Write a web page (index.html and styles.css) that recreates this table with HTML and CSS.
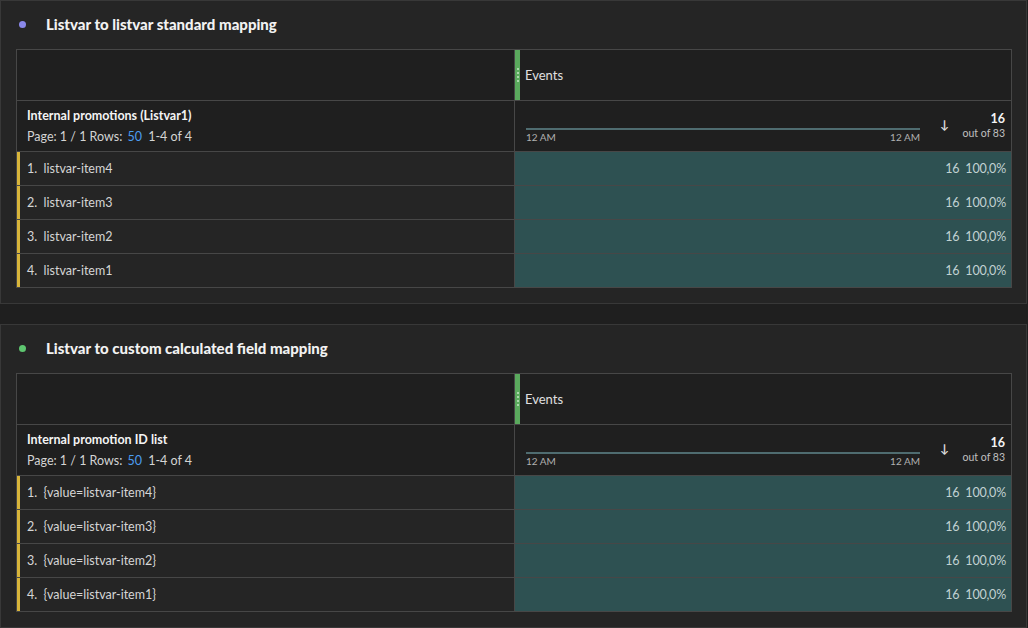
FILE: index.html
```html
<!DOCTYPE html>
<html>
<head>
<meta charset="utf-8">
<link rel="stylesheet" href="styles.css">
</head>
<body>
<section class="panel">
  <h2 class="panel-title"><span class="dot dot-purple"></span>Listvar to listvar standard mapping</h2>
  <div class="table">
    <div class="row head1">
      <div class="cell-left"></div>
      <div class="cell-right metric-head"><span class="grip"><i></i><i></i><i></i><i></i></span><span class="metric-name">Events</span></div>
    </div>
    <div class="row head2">
      <div class="cell-left dim-head">
        <div class="dim-title">Internal promotions (Listvar1)</div>
        <div class="pager">Page: 1 / 1 Rows: <span class="blue">50</span> 1-4 of 4</div>
      </div>
      <div class="cell-right summary">
        <div class="spark"><div class="spark-line"></div><div class="spark-labels"><span>12 AM</span><span>12 AM</span></div></div>
        <span class="sort">&#8595;</span>
        <div class="total"><b>16</b><span>out of 83</span></div>
      </div>
    </div>
    <div class="row data"><div class="cell-left item">1.&nbsp; listvar-item4</div><div class="cell-right val">16&nbsp; 100,0%</div></div>
    <div class="row data"><div class="cell-left item">2.&nbsp; listvar-item3</div><div class="cell-right val">16&nbsp; 100,0%</div></div>
    <div class="row data"><div class="cell-left item">3.&nbsp; listvar-item2</div><div class="cell-right val">16&nbsp; 100,0%</div></div>
    <div class="row data"><div class="cell-left item">4.&nbsp; listvar-item1</div><div class="cell-right val">16&nbsp; 100,0%</div></div>
  </div>
</section>
<section class="panel">
  <h2 class="panel-title"><span class="dot dot-green"></span>Listvar to custom calculated field mapping</h2>
  <div class="table">
    <div class="row head1">
      <div class="cell-left"></div>
      <div class="cell-right metric-head"><span class="grip"><i></i><i></i><i></i><i></i></span><span class="metric-name">Events</span></div>
    </div>
    <div class="row head2">
      <div class="cell-left dim-head">
        <div class="dim-title">Internal promotion ID list</div>
        <div class="pager">Page: 1 / 1 Rows: <span class="blue">50</span> 1-4 of 4</div>
      </div>
      <div class="cell-right summary">
        <div class="spark"><div class="spark-line"></div><div class="spark-labels"><span>12 AM</span><span>12 AM</span></div></div>
        <span class="sort">&#8595;</span>
        <div class="total"><b>16</b><span>out of 83</span></div>
      </div>
    </div>
    <div class="row data"><div class="cell-left item">1.&nbsp; {value=listvar-item4}</div><div class="cell-right val">16&nbsp; 100,0%</div></div>
    <div class="row data"><div class="cell-left item">2.&nbsp; {value=listvar-item3}</div><div class="cell-right val">16&nbsp; 100,0%</div></div>
    <div class="row data"><div class="cell-left item">3.&nbsp; {value=listvar-item2}</div><div class="cell-right val">16&nbsp; 100,0%</div></div>
    <div class="row data"><div class="cell-left item">4.&nbsp; {value=listvar-item1}</div><div class="cell-right val">16&nbsp; 100,0%</div></div>
  </div>
</section>
</body>
</html>
```

FILE: styles.css
```css
* { box-sizing: border-box; }
html, body { margin: 0; padding: 0; }
body {
  background: #1f1f1f;
  font-family: Lato, "Open Sans", sans-serif;
  color: #d8d8d8;
  width: 1028px;
  height: 628px;
  overflow: hidden;
}
.panel {
  width: 1027px;
  background: #252525;
  border: 1px solid #383838;
  padding: 0 15px 15px 15px;
  margin-bottom: 20px;
}
.panel-title {
  margin: 0;
  height: 48px;
  display: flex;
  align-items: center;
  font-size: 15px;
  font-weight: 900;
  color: #f2f2f2;
  padding-left: 3px;
  padding-bottom: 2px;
}
.dot {
  width: 7px;
  height: 7px;
  border-radius: 50%;
  margin-right: 20px;
  flex: none;
}
.dot-purple { background: #8a88ea; }
.dot-green { background: #5ec670; }
.table {
  width: 996px;
  border: 1px solid #474747;
  border-bottom: none;
  background: #1f1f1f;
}
.row {
  display: flex;
  border-bottom: 1px solid #474747;
}
.cell-left {
  width: 498px;
  border-right: 1px solid #474747;
  flex: none;
}
.cell-right {
  flex: 1;
  min-width: 0;
}
.head1 { height: 51px; }
.metric-head {
  display: flex;
  align-items: center;
}
.grip {
  width: 5px;
  align-self: stretch;
  background: #5aa95d;
  display: flex;
  flex-direction: column;
  align-items: center;
  justify-content: center;
  gap: 2px;
}
.grip i {
  width: 2px;
  height: 2px;
  background: #c6e6c6;
  border-radius: 50%;
}
.metric-name {
  margin-left: 5px;
  font-size: 13px;
  color: #e0e0e0;
}
.head2 { height: 51px; }
.dim-head {
  padding: 6px 0 0 10px;
}
.dim-title {
  font-size: 12.5px;
  font-weight: 700;
  color: #f4f4f4;
  line-height: 17px;
}
.pager {
  margin-top: 4px;
  font-size: 12.5px;
  color: #d4d4d4;
  line-height: 17px;
}
.blue { color: #4b9cf0; margin: 0 3px 0 2px; }
.summary {
  display: flex;
  align-items: flex-start;
  padding: 0 6px 0 11px;
}
.spark {
  width: 394px;
  margin-top: 27px;
}
.spark-line {
  height: 2px;
  background: #4f6c70;
}
.spark-labels {
  display: flex;
  justify-content: space-between;
  font-size: 10px;
  color: #b0b0b0;
  margin-top: 1px;
}
.sort {
  margin-left: 20px;
  margin-top: 16px;
  font-size: 12px;
  color: #dcdcdc;
  font-weight: 700;
}
.total {
  margin-left: auto;
  display: flex;
  flex-direction: column;
  align-items: flex-end;
  padding-top: 10px;
}
.total b {
  font-size: 12.5px;
  color: #f4f4f4;
  line-height: 15px;
}
.total span {
  font-size: 10.5px;
  color: #c0c0c0;
  line-height: 14px;
}
.data { height: 34px; }
.item {
  background: #252525;
  border-left: 3px solid #d8b53a;
  display: flex;
  align-items: center;
  padding-left: 7px;
  font-size: 12.5px;
  color: #d6d6d6;
}
.val {
  background: #2e5152;
  display: flex;
  align-items: center;
  justify-content: flex-end;
  padding-right: 5px;
  font-size: 12.5px;
  color: #c2d2d2;
  letter-spacing: -0.2px;
}
```
